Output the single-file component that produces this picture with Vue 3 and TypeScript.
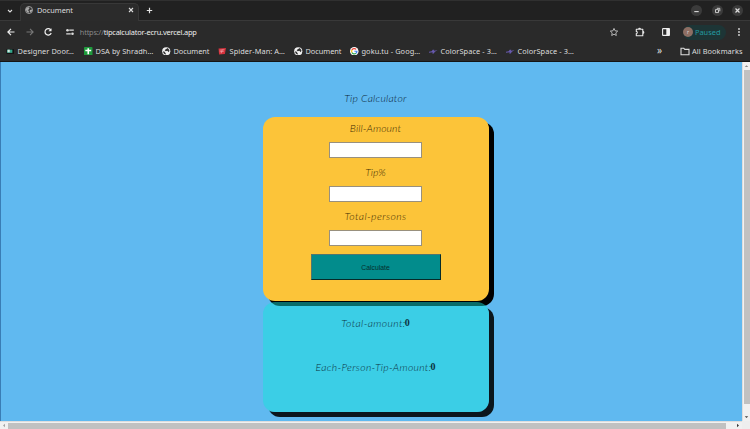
<script setup lang="ts">
import { ref } from 'vue'

interface Bookmark {
  label: string
  icon: 'door' | 'sheet' | 'globe' | 'spider' | 'google' | 'space'
}

const bookmarks: Bookmark[] = [
  { label: 'Designer Door…', icon: 'door' },
  { label: 'DSA by Shradh…', icon: 'sheet' },
  { label: 'Document', icon: 'globe' },
  { label: 'Spider-Man: A…', icon: 'spider' },
  { label: 'Document', icon: 'globe' },
  { label: 'goku.tu - Goog…', icon: 'google' },
  { label: 'ColorSpace - 3…', icon: 'space' },
  { label: 'ColorSpace - 3…', icon: 'space' },
]

const bill = ref('')
const tip = ref('')
const persons = ref('')
const total = ref(0)
const each = ref(0)

function calculate(): void {
  const amount = Number(bill.value)
  const tipAmount = (amount * Number(tip.value)) / 100
  total.value = amount + tipAmount
  each.value = Number(persons.value) ? tipAmount / Number(persons.value) : 0
}
</script>

<template>
  <div class="window">
    <header class="tabs">
      <div class="tab-search">
        <svg width="6" height="6" viewBox="0 0 6 6"><path d="M1 2l2 2 2-2" fill="none" stroke="#ddd" stroke-width="1.1" /></svg>
      </div>
      <div class="tab">
        <svg class="fav" viewBox="0 0 16 16"><circle cx="8" cy="8" r="7" fill="#303030" stroke="#a9a9a9" stroke-width="1.8" /><path d="M2 5l4-3 3 2-1 3-3 1 3 2-1 4-3-2-2-4zM10 8l4-1v3l-3 3-2-3z" fill="#a9a9a9" /></svg>
        <span class="tab-title">Document</span>
        <svg class="close" width="6" height="6" viewBox="0 0 6 6"><path d="M1 1l4 4M5 1L1 5" stroke="#ddd" stroke-width="1.1" /></svg>
      </div>
      <svg class="plus" width="7" height="7" viewBox="0 0 7 7"><path d="M3.5 .8v5.4M.8 3.5h5.4" stroke="#e4e4e4" stroke-width="1.2" /></svg>
      <div class="controls">
        <span class="control"><svg viewBox="0 0 10 10"><path d="M3 6h4" stroke="#ddd" /></svg></span>
        <span class="control"><svg viewBox="0 0 10 10"><path d="M3.2 4.2h2.7v2.7H3.2zM4.4 3h2.7v2.7" fill="none" stroke="#ddd" stroke-width=".8" /></svg></span>
        <span class="control"><svg viewBox="0 0 10 10"><path d="M3.2 3.2l3.6 3.6M6.8 3.2L3.2 6.8" stroke="#ddd" stroke-width="1.1" /></svg></span>
      </div>
    </header>

    <div class="toolbar">
      <svg class="nav" viewBox="0 0 10 10"><path d="M8.5 5H2M5 1.9L1.9 5 5 8.1" fill="none" stroke="#eee" stroke-width="1.2" /></svg>
      <svg class="nav" viewBox="0 0 10 10"><path d="M1.5 5H8M5 1.9L8.1 5 5 8.1" fill="none" stroke="#777" stroke-width="1.1" /></svg>
      <svg class="nav" viewBox="0 0 10 10"><path d="M8 3.3A3.2 3.2 0 1 0 8.2 6" fill="none" stroke="#eee" stroke-width="1.2" /><path d="M8.5 1.2v3.1H5.4z" fill="#eee" /></svg>
      <svg class="nav tune" viewBox="0 0 10 10"><path d="M4.2 3.2h4.6M1.2 6.8h4.6" stroke="#ddd" stroke-width="1.3" /><circle cx="2.5" cy="3.2" r="1.3" fill="#ddd" /><circle cx="7.5" cy="6.8" r="1.3" fill="#ddd" /></svg>
      <div class="url"><span>https://</span>tipcalculator-ecru.vercel.app</div>
      <div class="actions">
        <svg viewBox="0 0 10 10"><path d="M5 1.4l1.1 2.4 2.6.3-1.9 1.8.5 2.6L5 7.2 2.7 8.5l.5-2.6-1.9-1.8 2.6-.3z" fill="none" stroke="#d5d5d5" stroke-width=".8" /></svg>
        <svg viewBox="0 0 10 10"><path d="M1.3 2.2h6.5v6.5H1.3V6.5c1.3 0 1.3-2.1 0-2.1z" fill="none" stroke="#e8e8e8" stroke-width="1.1" stroke-linejoin="round" /><path d="M3.2 2a1.35 1.35 0 0 1 2.7 0zM8 4.1a1.35 1.35 0 0 1 0 2.7z" fill="#e8e8e8" /></svg>
        <svg viewBox="0 0 10 10"><rect x="1.6" y="1.6" width="6.8" height="6.8" rx=".5" fill="none" stroke="#eee" stroke-width="1.1" /><path d="M5.3 1.5h3.1v7H5.3z" fill="#eee" /></svg>
      </div>
      <div class="profile"><span class="avatar">r</span><span>Paused</span></div>
      <svg class="menu" width="4" height="10" viewBox="0 0 4 10"><g fill="#ddd"><circle cx="2" cy="2" r=".9" /><circle cx="2" cy="5" r=".9" /><circle cx="2" cy="8" r=".9" /></g></svg>
    </div>

    <nav class="bookmarks">
      <div v-for="(item, i) in bookmarks" :key="i" class="bookmark">
        <svg class="bm-icon" viewBox="0 0 16 16">
          <template v-if="item.icon === 'door'">
            <path d="M1 4h14v9H1z" fill="#111" /><path d="M2 5h10v6H2z" fill="#35a58a" /><path d="M3 5h4v5H3z" fill="#d9e5df" />
          </template>
          <template v-else-if="item.icon === 'sheet'">
            <rect width="16" height="16" rx="1.5" fill="#1e9b3c" /><path d="M8 2.5v11M2.5 6.5h11" stroke="#fff" stroke-width="3" />
          </template>
          <template v-else-if="item.icon === 'globe'">
            <circle cx="8" cy="8" r="7.7" fill="#f0f0f0" /><path d="M2 8l3 1 2 3 1 2c-4 0-6-3-6-6zM7 4l4-2 3 4-1 4-3-3-3 1-2-2z" fill="#303030" />
          </template>
          <template v-else-if="item.icon === 'spider'">
            <path d="M1 3l14-1-2 11-11 1z" fill="#d5303b" /><path d="M3 6l9-1M3 9l8-1M6 12l2-7" stroke="#f6bfc2" stroke-width="1" fill="none" />
          </template>
          <template v-else-if="item.icon === 'google'">
            <circle cx="8" cy="8" r="8" fill="#fff" /><g fill="none" stroke-width="2.3"><path d="M11.6 4.4A5 5 0 0 0 3.6 5.8" stroke="#ea4335" /><path d="M3.6 5.8a5 5 0 0 0 0 4.4" stroke="#fbbc05" /><path d="M3.6 10.2a5 5 0 0 0 7.8 1.6" stroke="#34a853" /><path d="M11.4 11.8A5 5 0 0 0 13 8H8.2" stroke="#4285f4" /></g>
          </template>
          <template v-else>
            <path d="M0 9l5-1 2-3h3l-1 2 7-1-5 3-2 3H6l1-2-7 1z" fill="#6759ad" />
          </template>
        </svg>
        <span>{{ item.label }}</span>
      </div>
      <span class="more">»</span>
      <svg class="folder" viewBox="0 0 10 9"><path d="M1 1.3h2.8l1 1.1H9v5.3H1z" fill="none" stroke="#ddd" stroke-width="1.1" /></svg>
      <span class="all">All Bookmarks</span>
    </nav>

    <div class="viewport">
      <main class="page">
        <h1>Tip Calculator</h1>
        <form class="card form" @submit.prevent="calculate">
          <label class="bill" for="bill">Bill-Amount</label>
          <input id="bill" v-model="bill" type="text" />
          <label class="tip" for="tip">Tip%</label>
          <input id="tip" v-model="tip" type="text" />
          <label class="persons" for="persons">Total-persons</label>
          <input id="persons" v-model="persons" type="text" />
          <button type="submit">Calculate</button>
        </form>
        <section class="card result">
          <p><span class="total">Total-amount:</span><b>{{ total }}</b></p>
          <p><span class="each">Each-Person-Tip-Amount:</span><b>{{ each }}</b></p>
        </section>
      </main>
      <div class="scroll-y">
        <svg viewBox="0 0 8 8"><path d="M2 5l2-2 2 2z" fill="#888" /></svg>
        <div class="thumb-y"></div>
        <svg viewBox="0 0 8 8"><path d="M2 3l2 2 2-2z" fill="#444" /></svg>
      </div>
      <div class="scroll-x">
        <svg viewBox="0 0 8 8"><path d="M5 2L3 4l2 2z" fill="#999" /></svg>
        <div class="thumb-x"></div>
        <svg viewBox="0 0 8 8"><path d="M3 2l2 2-2 2z" fill="#222" /></svg>
      </div>
      <div class="corner"></div>
    </div>
  </div>
</template>

<style>
body { margin: 0; overflow: hidden; }
</style>

<style scoped>
* { box-sizing: border-box; }
svg { display: block; flex: none; }
.window { width: 750px; height: 429px; display: flex; flex-direction: column; background: #2a2a2a; color: #ddd; font: 7.4px/10px "Noto Sans", sans-serif; overflow: hidden; white-space: nowrap; }
.tabs { height: 21px; flex: none; display: flex; align-items: center; background: #212121; border-bottom: 1px solid #393939; border-top: 1px solid #303030; }
.tab-search { width: 20px; height: 19px; display: flex; align-items: center; justify-content: center; }
.tab { width: 119px; height: 18px; align-self: flex-end; margin-bottom: -1px; border-radius: 5px 5px 0 0; background: #2b2b2b; border: 1px solid #383838; border-bottom: 0; display: flex; align-items: center; padding: 0 4px 5px; }
.fav { width: 8px; height: 8px; }
.tab-title { margin-left: 4px; letter-spacing: -.05px; }
.close { margin-left: auto; }
.plus { margin-left: 7px; }
.controls { margin-left: auto; margin-right: 7px; display: flex; gap: 9.5px; }
.control { width: 11px; height: 11px; border-radius: 50%; background: #3b3b3b; }
.control svg { width: 11px; height: 11px; }
.toolbar { height: 22px; flex: none; display: flex; align-items: center; padding: 0 9px 0 6px; }
.nav { width: 10px; height: 10px; margin-right: 8.6px; }
.tune { margin-left: 3px; margin-right: 5px; }
.url { color: #eee; letter-spacing: -.19px; }
.url span { color: #888; }
.actions { margin-left: auto; display: flex; gap: 16.5px; }
.actions svg { width: 10px; height: 10px; }
.actions svg:nth-child(1) { margin-right: -1px; }
.profile { width: 43px; height: 15px; margin-left: 12px; border-radius: 8px; background: #1d3536; color: #249ba1; display: flex; align-items: center; padding-left: 0; gap: 2px; }
.avatar { width: 10px; height: 10px; border-radius: 50%; background: #8d6e63; color: #ddd; font-size: 5px; line-height: 10px; text-align: center; }
.menu { margin-left: 11px; }
.bookmarks { height: 19px; flex: none; border-bottom: 1px solid #151515; display: grid; grid-template-columns: 78px 78px 56px 76px 56px 79px 77px 151px 23px 12px 1fr; align-items: center; padding: 0 0 2px 6px; }
.bookmark { display: flex; align-items: center; gap: 3px; letter-spacing: .07px; }
.bookmark:nth-child(3), .bookmark:nth-child(5) { letter-spacing: -.05px; }
.bm-icon { width: 8.5px; height: 8.5px; }
.more { font-size: 10px; line-height: 10px; margin-top: -2px; }
.folder { width: 10px; height: 9px; }
.all { letter-spacing: .06px; }
.viewport { flex: 1; min-height: 0; display: grid; grid-template-columns: 742px 8px; grid-template-rows: 359px 8px; }
.page { background: #60b9f0; display: flex; flex-direction: column; align-items: center; color: #000; font: italic 300 10.4px/14px Lato, sans-serif; padding-left: 9px; border-left: 1px solid #397db5; }
h1 { margin: 29px 1px 11.5px 0; font: inherit; color: #0a2438; letter-spacing: .23px; }
.card { width: 226px; border-radius: 12px; box-shadow: 5px 5px 0 #000; display: flex; flex-direction: column; align-items: center; padding-right: 1px; }
.form { height: 184.5px; background: #fcc439; padding-top: 4.5px; color: #402c04; }
.bill { letter-spacing: .12px; }
.persons { letter-spacing: .43px; }
input { display: block; width: 93px; height: 16px; margin: 7px 0 7px; padding: 1px 2px; background: #fff; border: 1px solid #98907e; border-radius: 0; }
button { width: 130px; height: 26px; margin-top: 1px; padding: 0; background: #028c8c; border: 1px solid; border-color: #50766f #062b29 #062b29 #50766f; color: #052e2e; font: 6.8px "Liberation Sans", sans-serif; }
.result { position: relative; height: 110px; margin-top: 1px; padding-top: 14px; background: rgba(20, 230, 220, .54); opacity: .88; color: #001c28; }
.result p { margin: 0 0 30px; display: flex; }
.total { letter-spacing: .38px; }
.each { letter-spacing: .31px; }
.result b { margin-left: -1px; color: #001c25; font: normal bold 10px/14px "Liberation Serif", serif; }
.scroll-y { background: #f1f1f1; display: flex; flex-direction: column; border-left: 1px solid #ddd; }
.scroll-y svg { width: 7px; height: 8px; }
.thumb-y { height: 334px; width: 6px; margin-left: 1px; background: #c1c1c1; margin-bottom: 9px; }
.scroll-x { display: flex; background: #f1f1f1; border-top: 1px solid #ddd; }
.scroll-x svg { width: 8px; height: 7px; }
.thumb-x { width: 718px; background: #c1c1c1; height: 6px; margin-top: 1px; margin-right: 8px; }
.corner { background: #eee; }
</style>
